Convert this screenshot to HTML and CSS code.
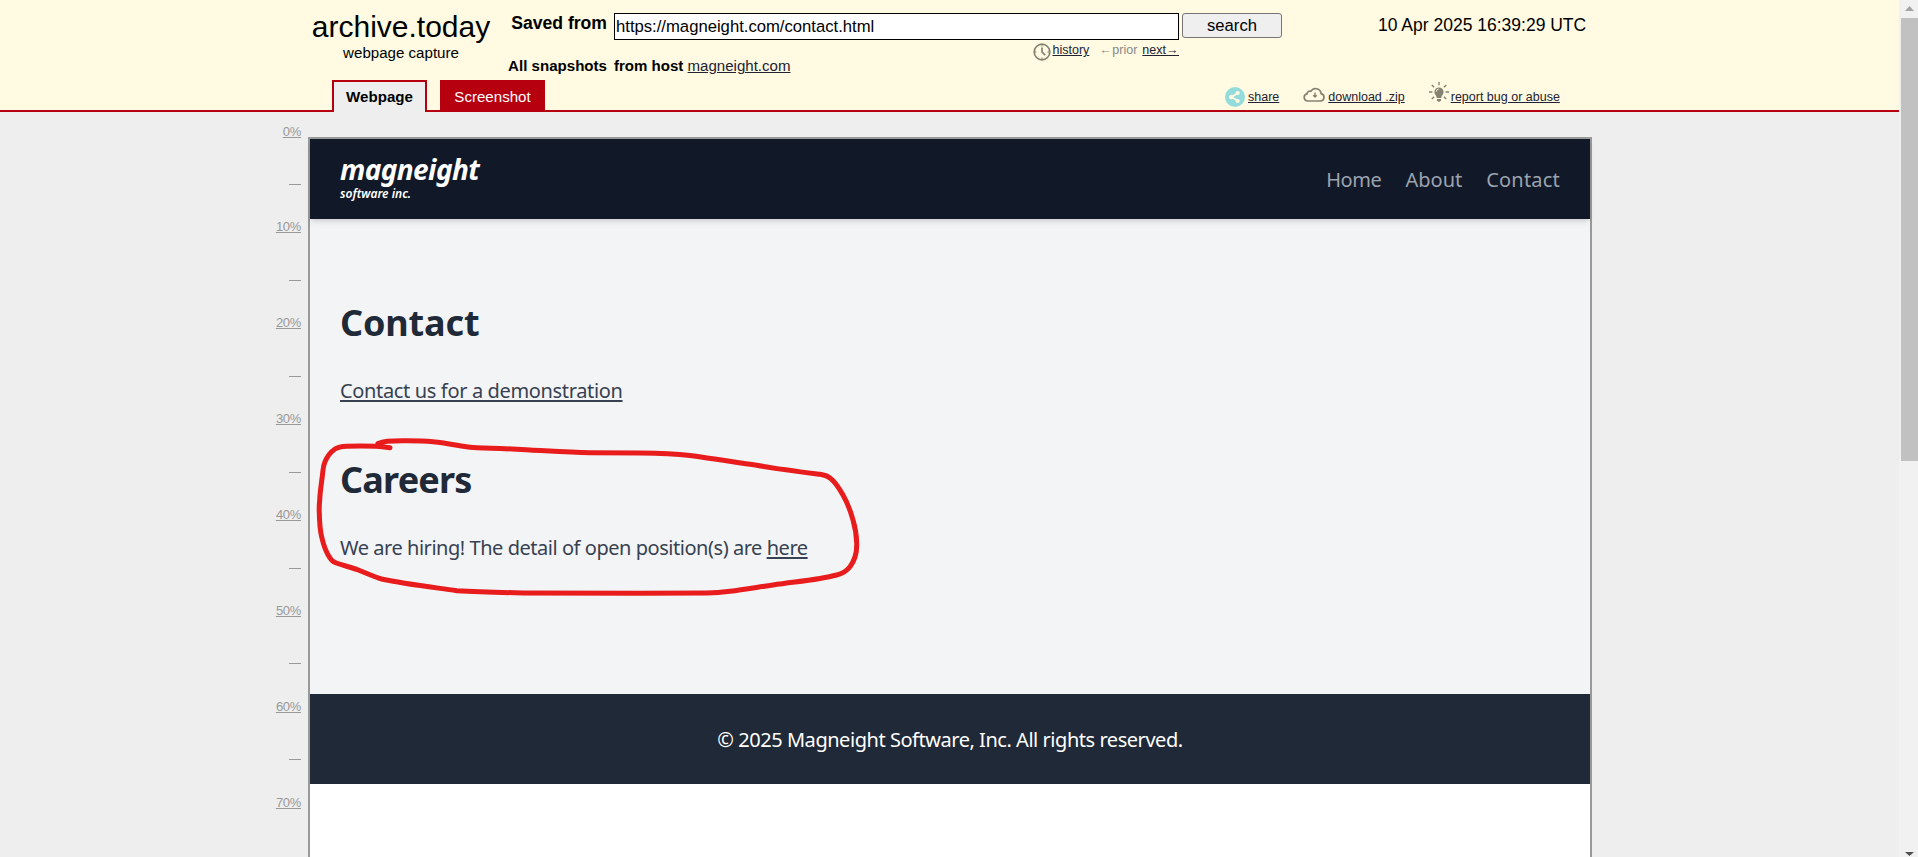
FILE: index.html
```html
<!DOCTYPE html>
<html lang="en">
<head>
<meta charset="utf-8">
<title>archive.today - magneight.com</title>
<link rel="stylesheet" href="styles.css">
</head>
<body>
<div class="view">
  <header class="top">
    <div class="top-row">
      <div class="brand"><div class="brand-name">archive.today</div><div class="brand-sub">webpage capture</div></div>
      <div class="labels"><b class="saved">Saved from</b><b class="snaps">All snapshots</b></div>
      <div class="fields">
        <input class="url" type="text" value="https://magneight.com/contact.html">
        <div class="under">
          <div class="host"><b>from host</b> <a>magneight.com</a></div>
          <div class="hist">
            <svg class="clock" viewBox="0 0 18 18"><circle cx="9" cy="9" r="7.800"/><path d="M9 4.500V9l3.200 3.200"/><path class="ticks" d="M9 2v1.500M9 14.500V16M2 9h1.500M14.500 9H16"/></svg>
            <a class="t-history">history</a><span class="t-prior"><span class="arr">←</span>prior</span><a class="t-next">next<span class="arr">→</span></a>
          </div>
        </div>
      </div>
      <button class="search">search</button>
      <div class="date">10 Apr 2025 16:39:29 UTC</div>
    </div>
    <div class="tab-row">
      <div class="tab active">Webpage</div>
      <div class="tab shot">Screenshot</div>
      <div class="tools">
        <svg class="i-share" viewBox="0 0 20 20"><circle cx="10" cy="10" r="10" fill="#94dcdc"/><path d="M13 6 6.500 10l6.500 4" fill="none" stroke="#fffae1" stroke-width="1.600"/><circle cx="12.700" cy="6" r="2.100" fill="#fffae1"/><circle cx="6.300" cy="10" r="2.300" fill="#fffae1"/><circle cx="12.700" cy="14" r="2.100" fill="#fffae1"/></svg>
        <a class="t-share">share</a>
        <svg class="i-cloud" viewBox="0 0 22 15"><path d="M5 14h12.500a3.700 3.700 0 0 0 .6-7.300A5.600 5.600 0 0 0 7.800 4.200 3 3 0 0 0 4 6.900 3.600 3.600 0 0 0 5 14Z" fill="none" stroke="#858272" stroke-width="1.700"/><path d="M12 5.500v4.500M10.200 8.300 12 10.100l1.800-1.800" fill="none" stroke="#858272" stroke-width="1.400"/></svg>
        <a class="t-zip">download .zip</a>
        <svg class="i-bulb" viewBox="0 0 20 20"><path d="M10 5.400a4.600 4.600 0 0 0-4.600 4.600c0 2.500 2.100 3.200 2.400 6h4.400c.3-2.800 2.400-3.500 2.400-6A4.600 4.600 0 0 0 10 5.400Z" fill="#858272"/><path d="M8 17h4v1.300l-1.200 1.500H9.200L8 18.300Z" fill="#858272"/><path d="M7.200 9.700A3 3 0 0 1 9.700 7" stroke="#fffae1" stroke-width=".9" fill="none"/><path d="M10 0v3.200M0 10h3.400M16.600 10H20M2.800 2.900l2.300 2.300M17.200 2.900l-2.300 2.300M2.800 17.100l2.300-2.300M17.200 17.100l-2.300-2.300" stroke="#858272" stroke-width="1.400"/></svg>
        <a class="t-bug">report bug or abuse</a>
      </div>
    </div>
  </header>
  <div class="stage">
    <div class="rail">
      <a>0%</a><i></i><a>10%</a><i></i><a>20%</a><i></i><a>30%</a><i></i><a>40%</a><i></i><a>50%</a><i></i><a>60%</a><i></i><a>70%</a>
    </div>
    <div class="frame">
      <div class="nav">
        <div class="logo"><div class="logo-name">magneight</div><div class="logo-sub">software inc.</div></div>
        <nav class="links"><a class="n-home">Home</a><a class="n-about">About</a><a class="n-contact">Contact</a></nav>
      </div>
      <main class="main">
        <h1 class="h-contact">Contact</h1>
        <p class="p-demo"><a>Contact us for a demonstration</a></p>
        <h1 class="h-careers">Careers</h1>
        <p class="p-hiring">We are hiring! The detail of open position(s) are <a>here</a></p>
        <svg class="scribble" viewBox="310 430 560 176"><path d="M390 447.700C385 447 381 446.500 376 446.300C366 446 356 446 347 446.300C342 446.500 338 447 335 449C329 453 327 457 325 461.700C323 466 323 470 322.700 473C321.500 483 320 492 319.700 500Q319 507 319.300 513C319.500 522 320 530 321.700 537C323.500 545 326.500 553 330 558Q331.500 560.500 334 562C341 565 350 567 358.300 570C366 573 374 577 381.700 579C405 584 431 587 456.700 590.700C478 592 500 592.500 523 592.900L640 593.200L706.700 593Q718 593 730 591.300C744 589.500 759 587 773 585C796 581.500 818 580 836.700 575C843 573.500 847 570.500 850 566.700C855 560 857 551 856.700 543Q856.500 532 853 520C850.500 511 847 502 843 495C839 488 835 481.500 830 478Q826.500 475.200 820 474.300C798 471.500 778 469 756.700 465.300C734 462 712 458.500 690 455.500C674 453.500 657 453 640 452.900L590 452.700C570 452.300 550 451 530 450C512 449 495 448 477 447.700Q470 447.500 463 446.300C453 444.500 443 442.500 433 441.700C424 440.800 415 440.700 407 440.700Q396 440.500 387 441.200Q382 441.700 378 443.500"/></svg>
      </main>
      <footer class="foot"><span>© 2025 Magneight Software, Inc. All rights reserved.</span></footer>
    </div>
  </div>
</div>
<div class="scroll">
  <svg class="arrow" viewBox="0 0 9 5"><path d="M0 5 4.500 0 9 5Z" fill="#a3a3a3"/></svg>
  <div class="thumb"></div>
  <svg class="arrow down" viewBox="0 0 9 4"><path d="M0 0h9L4.500 4Z" fill="#505050"/></svg>
</div>
</body>
</html>
```
FILE: styles.css
```css
* { box-sizing: border-box; }
body {
  margin: 0; height: 857px; overflow: hidden; display: flex;
  background: #eee; color: #000; font-family: "Liberation Sans", Arial, sans-serif;
}
a { text-decoration: underline; }
.view { width: 1899px; height: 857px; overflow: hidden; display: flex; flex-direction: column; white-space: nowrap; }

/* archive toolbar */
.top { height: 112px; flex: none; background: #fffae1; border-bottom: 2px solid #b7000f; }
.top-row { height: 80px; display: flex; padding-left: 301px; }
.brand { width: 200px; text-align: center; padding-top: 9px; }
.brand-name { font-size: 30px; line-height: 35px; }
.brand-sub { font-size: 15.100px; line-height: 18px; }
.labels { width: 106px; display: flex; flex-direction: column; align-items: flex-end; padding-top: 13px; }
.saved { font-size: 17.600px; line-height: 20px; }
.snaps { font-size: 15.100px; line-height: 18px; margin-top: 24px; }
.fields { width: 565px; margin-left: 7px; padding-top: 13px; }
.url { display: block; width: 565px; height: 27px; border: 1px solid #000; background: #fff; padding: 0 0 0 1px; font: 16.670px "Liberation Sans", Arial, sans-serif; color: #000; }
.under { display: flex; justify-content: space-between; color: #223; }
.host { font-size: 15.050px; line-height: 18px; padding-top: 17px; }
.host b { color: #000; }
.hist { display: flex; font-size: 12.500px; line-height: 14px; padding-top: 3px; }
.clock { width: 18px; height: 18px; margin-right: 2px; fill: none; stroke: #858272; stroke-width: 1.700; }
.ticks { stroke-width: 1; }
.t-prior { color: #888; margin: 0 5px 0 10px; }
.arr { letter-spacing: .5px; }
.search { width: 100px; height: 25px; margin: 13px 0 0 3px; border: 1px solid #767676; border-radius: 3px; background: #efefef; font: 16.670px "Liberation Sans", Arial, sans-serif; padding: 0; color: #000; }
.date { margin-left: 96px; padding-top: 15px; font-size: 17.500px; line-height: 20px; }
.tab-row { height: 32px; display: flex; align-items: flex-start; padding-left: 332px; }
.tab { font-size: 15.100px; text-align: center; }
.active { width: 95px; height: 32px; line-height: 30px; font-weight: bold; background: #eee; border: 2px solid #b7000f; border-bottom: 0; }
.shot { width: 105px; height: 30px; line-height: 34px; margin-left: 13px; color: #fff; background: #b7000f; }
.tools { display: flex; height: 30px; margin-left: 680px; font-size: 12.500px; line-height: 34px; color: #223; }
.tools svg { flex: none; }
.i-share { width: 20px; height: 20px; margin: 7px 3px 0 0; }
.i-cloud { width: 22px; height: 15px; margin: 7px 3px 0 24px; }
.i-bulb { width: 20px; height: 20px; margin: 2px 2px 0 24px; }

/* percentage rail and captured page */
.stage { flex: 1; display: flex; }
.rail { width: 301px; display: flex; flex-direction: column; align-items: flex-end; padding-top: 9.600px; color: #999; font-size: 13px; letter-spacing: -.3px; }
.rail a { height: 20px; line-height: 20px; }
.rail i { width: 12px; height: 1px; background: #999; margin: 42.600px 0 32.250px; flex: none; }
.frame { width: 1284px; height: 760px; margin: 25px 0 0 7px; border: 2px solid #999; background: #fff; font-family: "Noto Sans", sans-serif; }
.nav { position: relative; z-index: 1; height: 80px; display: flex; justify-content: space-between; padding: 0 30px; background: #111827; box-shadow: 0 4px 6px -1px rgba(0,0,0,.1), 0 2px 4px -1px rgba(0,0,0,.08); }
.logo { color: #fff; font-style: italic; padding-top: 13px; }
.logo-name { font-size: 28px; line-height: 34px; font-weight: 700; letter-spacing: -.6px; }
.logo-sub { font-size: 12px; line-height: 16px; font-weight: 600; }
.links { display: flex; gap: 24px; color: #9ca3af; font-size: 20px; line-height: 82px; }
.links a { text-decoration: none; }
.n-home { letter-spacing: -.4px; }
.n-contact { letter-spacing: .2px; }
.main { position: relative; height: 475px; background: #f3f4f6; padding: 80px 30px 0; color: #374151; }
.main h1 { margin: 0; font-size: 36px; line-height: 48px; color: #1f2937; letter-spacing: -.15px; }
.main p { margin: 0; font-size: 20px; line-height: 30px; padding-top: 29px; letter-spacing: -.35px; }
.main .p-hiring { letter-spacing: -.46px; }
.rail a { text-decoration-thickness: 1px; }
.main p a { text-decoration-thickness: 2px; text-underline-offset: 2px; }
.main .h-careers { margin-top: 50px; letter-spacing: -.8px; }
.scribble { position: absolute; left: 0; top: 211px; width: 560px; height: 176px; overflow: visible; }
.scribble path { fill: none; stroke: #e81c1c; stroke-width: 5; stroke-linecap: round; stroke-linejoin: round; }
.foot { height: 90px; background: #1f2937; color: #fff; text-align: center; font-size: 20px; line-height: 91px; letter-spacing: -.46px; }

/* scrollbar */
.scroll { width: 19px; height: 857px; background: #f1f1f1; display: flex; flex-direction: column; align-items: flex-end; }
.arrow { width: 9px; height: 5px; margin: 6px 4px 7px 0; flex: none; }
.thumb { width: 17px; height: 443px; background: #c1c1c1; }
.down { height: 4px; margin: auto 4px 1px 0; }
```
